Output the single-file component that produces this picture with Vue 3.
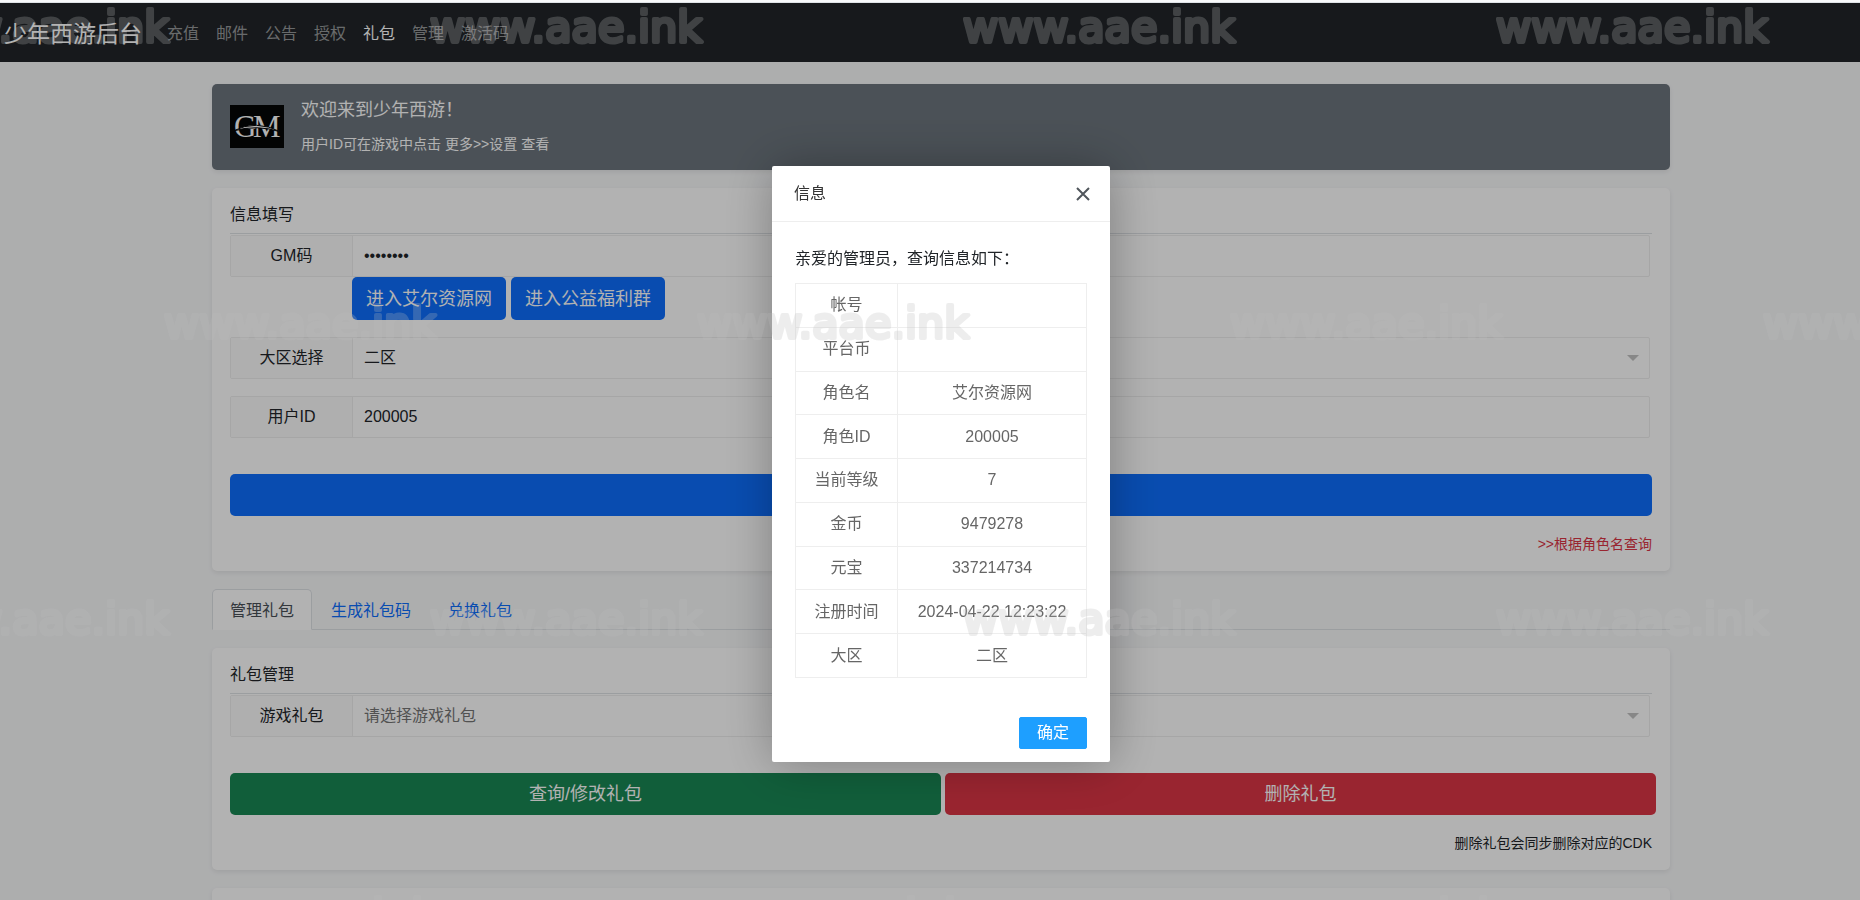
<script setup>
import { ref } from 'vue'

const navItems = ['充值', '邮件', '公告', '授权', '礼包', '管理', '激活码']
const activeNav = '礼包'

const tabs = ['管理礼包', '生成礼包码', '兑换礼包']
const activeTab = ref('管理礼包')

const gmCode = ref('12345678')
const zone = ref('二区')
const userId = ref('200005')
const gift = ref('')

const dialogOpen = ref(true)
const info = [
  ['帐号', ''],
  ['平台币', ''],
  ['角色名', '艾尔资源网'],
  ['角色ID', '200005'],
  ['当前等级', '7'],
  ['金币', '9479278'],
  ['元宝', '337214734'],
  ['注册时间', '2024-04-22 12:23:22'],
  ['大区', '二区'],
]
</script>

<template>
  <div class="page" lang="zh-CN">
    <div class="strip"></div>
    <header class="navbar">
      <a class="brand" href="#">少年西游后台</a>
      <nav class="nav">
        <a
          v-for="item in navItems"
          :key="item"
          href="#"
          :class="['nav-link', { active: item === activeNav }]"
        >{{ item }}</a>
      </nav>
    </header>

    <div class="stage">
      <main class="container">
        <section class="banner">
          <svg class="logo" viewBox="0 0 54 43" role="img" aria-label="GM">
            <rect width="54" height="43" fill="#050607" />
            <text class="logo-letter" x="4" y="32" font-size="31">G</text>
            <text class="logo-letter" x="23" y="32" font-size="31">M</text>
            <path d="M3 26 Q26 14 51 27 Q27 19 3 26Z" fill="#fff" stroke="#050607" stroke-width="1" />
          </svg>
          <div>
            <h1 class="welcome">欢迎来到少年西游！</h1>
            <p class="hint">用户ID可在游戏中点击 更多&gt;&gt;设置 查看</p>
          </div>
        </section>

        <section class="card">
          <h2 class="card-title">信息填写</h2>
          <div class="field">
            <label for="gm">GM码</label>
            <input id="gm" v-model="gmCode" type="password" />
          </div>
          <div class="links">
            <button type="button" class="btn primary">进入艾尔资源网</button>
            <button type="button" class="btn primary">进入公益福利群</button>
          </div>
          <div class="field spaced">
            <label for="zone">大区选择</label>
            <select id="zone" v-model="zone">
              <option>一区</option>
              <option>二区</option>
            </select>
            <svg class="caret" viewBox="0 0 12 6"><path d="M0 0H12L6 6Z" fill="#c2c2c2" /></svg>
          </div>
          <div class="field spaced">
            <label for="uid">用户ID</label>
            <input id="uid" v-model="userId" type="text" />
          </div>
          <button type="button" class="btn primary wide" aria-label="查询"></button>
          <p class="note"><a class="danger-link" href="#">&gt;&gt;根据角色名查询</a></p>
        </section>

        <div class="tabs" role="tablist">
          <button
            v-for="tab in tabs"
            :key="tab"
            type="button"
            role="tab"
            :aria-selected="tab === activeTab"
            :class="['tab', { active: tab === activeTab }]"
            @click="activeTab = tab"
          >{{ tab }}</button>
        </div>

        <section class="card">
          <h2 class="card-title">礼包管理</h2>
          <div class="field">
            <label for="gift">游戏礼包</label>
            <select id="gift" v-model="gift" class="empty">
              <option value="">请选择游戏礼包</option>
            </select>
            <svg class="caret" viewBox="0 0 12 6"><path d="M0 0H12L6 6Z" fill="#c2c2c2" /></svg>
          </div>
          <div class="actions">
            <button type="button" class="btn success">查询/修改礼包</button>
            <button type="button" class="btn danger">删除礼包</button>
          </div>
          <p class="note">删除礼包会同步删除对应的CDK</p>
        </section>

        <section class="card"></section>
      </main>
    </div>

    <div v-if="dialogOpen" class="shade">
      <div class="dialog" role="dialog" aria-labelledby="dialog-title">
        <header class="dialog-head">
          <h2 id="dialog-title">信息</h2>
          <button type="button" class="close" aria-label="关闭" @click="dialogOpen = false">
            <svg viewBox="0 0 14 14"><path d="M1 1L13 13M13 1L1 13" stroke="#50565c" stroke-width="2" /></svg>
          </button>
        </header>
        <div class="dialog-body">
          <p>亲爱的管理员，查询信息如下：</p>
          <table>
            <tbody>
              <tr v-for="[name, value] in info" :key="name">
                <th scope="row">{{ name }}</th>
                <td>{{ value }}</td>
              </tr>
            </tbody>
          </table>
        </div>
        <footer class="dialog-foot">
          <button type="button" class="confirm" @click="dialogOpen = false">确定</button>
        </footer>
      </div>
    </div>

    <div class="watermark" aria-hidden="true">
      <div v-for="row in 4" :key="row" :class="['mark-row', { shifted: row % 2 === 0 }]">
        <svg v-for="n in 4" :key="n" class="mark" viewBox="0 0 533 60">
          <text x="0" y="42">www.aae.ink</text>
        </svg>
      </div>
    </div>
  </div>
</template>

<style>
body {
  overflow: hidden;
}
</style>

<style scoped>
.page {
  height: 100vh;
  overflow: hidden;
  background: #f8f9fa;
  color: #212529;
  font-family: "Liberation Sans", "Noto Sans CJK SC", sans-serif;
  font-size: 16px;
  line-height: 24px;
}

.page *,
.page {
  box-sizing: border-box;
}

h1,
h2,
p {
  margin: 0;
  font-weight: inherit;
}

button,
input,
select {
  font: inherit;
  color: inherit;
}

a {
  text-decoration: none;
}

.strip {
  height: 3px;
  border-bottom: 1px solid #dee2e6;
}

.navbar {
  display: flex;
  align-items: center;
  gap: 17px;
  height: 59px;
  padding: 2px 4px 0;
  background: #212529;
}

.brand {
  font-size: 23px;
  line-height: 32px;
  color: #fff;
}

.nav {
  display: flex;
  gap: 1px;
}

.nav-link {
  padding: 0 8px;
  color: rgba(255, 255, 255, 0.55);
}

.nav-link.active {
  color: #fff;
}

.stage {
  padding-left: 22px;
}

.container {
  display: flex;
  flex-direction: column;
  margin: 0 190px;
  padding-top: 22px;
  gap: 18px;
}

.banner,
.card {
  border-radius: 5px;
  box-shadow: 0 2px 5px rgba(0, 0, 0, 0.08);
}

.banner {
  display: flex;
  align-items: center;
  gap: 17px;
  height: 86px;
  padding: 0 18px 1px;
  background: #6c757d;
  color: #fff;
}

.logo {
  width: 54px;
  height: 43px;
}

.logo-letter {
  font-family: "Liberation Serif", serif;
  fill: #fff;
}

.welcome {
  margin-bottom: 10px;
  font-size: 18px;
}

.hint {
  font-size: 14px;
}

.card {
  padding: 15px 18px 14px;
  background: #fff;
}

.card:last-child {
  height: 120px;
}

.card-title {
  padding-bottom: 6px;
  margin-bottom: 1px;
  border-bottom: 1px solid #dee2e6;
  font-size: 16px;
}

.field {
  position: relative;
  display: flex;
  height: 42px;
  margin-right: 2px;
  border: 1px solid #eee;
  border-radius: 2px;
}

.field label {
  width: 122px;
  padding: 8px 0;
  background: #fbfbfb;
  border-right: 1px solid #eee;
  text-align: center;
}

.field input,
.field select {
  flex: 1;
  min-width: 0;
  padding: 0 11px;
  border: 0;
  outline: 0;
  background: none;
  appearance: none;
}

.field .empty {
  color: #757575;
}

.caret {
  position: absolute;
  top: 17px;
  right: 10px;
  width: 12px;
  height: 6px;
  pointer-events: none;
}

.links {
  display: flex;
  gap: 5px;
  padding-left: 122px;
}

.spaced {
  margin-top: 17px;
}

.btn {
  height: 42px;
  padding: 0 14px;
  border: 0;
  border-radius: 5px;
  font-size: 18px;
  color: #fff;
}

.links .btn {
  height: 43px;
}

.primary {
  background: #0d6efd;
}

.success {
  background: #198754;
}

.danger {
  background: #dc3545;
}

.wide {
  display: block;
  width: 100%;
  margin-top: 36px;
}

.actions {
  display: flex;
  gap: 4px;
  margin: 36px -4px 0 0;
}

.actions .btn {
  flex: 1;
}

.note {
  padding: 16px 0 1px;
  font-size: 14px;
  text-align: right;
}

.danger-link {
  color: #dc3545;
}

.tabs {
  display: flex;
  gap: 1px;
  border-bottom: 1px solid #dee2e6;
}

.tab {
  height: 41px;
  margin-bottom: -1px;
  padding: 2px 17px 0;
  border: 1px solid transparent;
  border-radius: 5px 5px 0 0;
  background: none;
  color: #0d6efd;
}

.tab.active {
  background: #fff;
  border-color: #dee2e6 #dee2e6 #fff;
  color: #495057;
}

.shade {
  position: fixed;
  inset: 3px 0 0;
  display: flex;
  align-items: center;
  justify-content: center;
  padding: 25px 0 0 22px;
  background: rgba(0, 0, 0, 0.3);
}

.dialog {
  width: 338px;
  background: #fff;
  border-radius: 2px;
  box-shadow: 1px 1px 50px rgba(0, 0, 0, 0.3);
}

.dialog-head {
  display: flex;
  align-items: center;
  justify-content: space-between;
  height: 56px;
  padding: 0 20px 0 22px;
  border-bottom: 1px solid #eee;
  color: #333;
}

.dialog-head h2 {
  font-size: 16px;
}

.close {
  display: flex;
  padding: 0;
  border: 0;
  background: none;
}

.close svg {
  width: 14px;
  height: 14px;
}

.dialog-body {
  padding: 25px 23px 0;
  color: #212529;
}

.dialog-body table {
  width: 100%;
  height: 395px;
  margin-top: 12px;
  border-collapse: collapse;
  color: #666;
}

.dialog-body th,
.dialog-body td {
  padding: 0;
  border: 1px solid #eee;
  font-weight: inherit;
  text-align: center;
}

.dialog-body th {
  width: 102px;
}

.dialog-foot {
  display: flex;
  justify-content: flex-end;
  padding: 39px 23px 13px;
}

.confirm {
  height: 32px;
  padding: 0 17px;
  border: 1px solid #1e9fff;
  border-radius: 2px;
  background: #1e9fff;
  color: #fff;
}

.watermark {
  position: fixed;
  inset: 0;
  overflow: hidden;
  opacity: 0.25;
  pointer-events: none;
}

.mark-row {
  display: flex;
  height: 296px;
  margin-left: -103px;
}

.mark-row.shifted {
  margin-left: 164px;
}

.mark {
  flex: none;
  width: 533px;
  height: 60px;
  fill: #bcbcbc;
  stroke: #bcbcbc;
  stroke-width: 4px;
  stroke-linejoin: round;
  font-family: "DejaVu Sans", sans-serif;
  font-size: 43px;
}
</style>
